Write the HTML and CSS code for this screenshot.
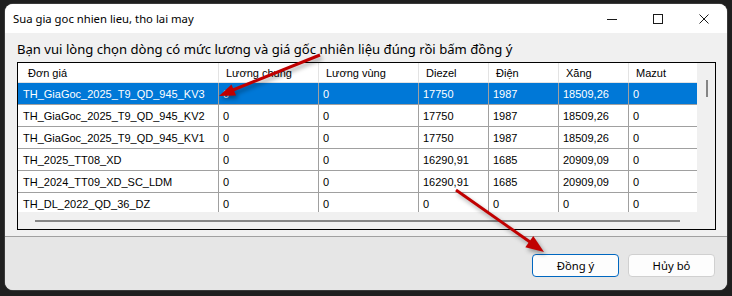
FILE: index.html
```html
<!DOCTYPE html>
<html lang="vi">
<head>
    <meta charset="UTF-8">
    <meta name="viewport" content="width=device-width, initial-scale=1.0">
    <title>Sua gia goc nhien lieu, tho lai may</title>
    <link rel="stylesheet" href="styles.css">
</head>
<body>
    <div class="window">
        <div class="titlebar">
            <span class="title">Sua gia goc nhien lieu, tho lai may</span>
            <div class="controls">
                <span class="ctl">
                    <svg width="10" height="10" viewBox="0 0 10 10"><path d="M0 5.5h10" stroke="#1a1a1a" stroke-width="1"/></svg>
                </span>
                <span class="ctl">
                    <svg width="10" height="10" viewBox="0 0 10 10"><rect x="0.5" y="0.5" width="9" height="9" fill="none" stroke="#1a1a1a" stroke-width="1"/></svg>
                </span>
                <span class="ctl">
                    <svg width="10" height="10" viewBox="0 0 10 10"><path d="M0.5 0.5l9 9M9.5 0.5l-9 9" stroke="#1a1a1a" stroke-width="1"/></svg>
                </span>
            </div>
        </div>

        <div class="content">
            <p class="prompt">Bạn vui lòng chọn dòng có mức lương và giá gốc nhiên liệu đúng rồi bấm đồng ý</p>

            <div class="grid">
                <div class="grid-main">
                    <div class="rows">
                        <div class="row head">
                            <span class="first">Đơn giá</span><span>Lương chung</span><span>Lương vùng</span><span>Diezel</span><span>Điện</span><span>Xăng</span><span>Mazut</span>
                        </div>
                        <div class="row selected">
                            <span>TH_GiaGoc_2025_T9_QD_945_KV3</span><span>0</span><span>0</span><span>17750</span><span>1987</span><span>18509,26</span><span>0</span>
                        </div>
                        <div class="row">
                            <span>TH_GiaGoc_2025_T9_QD_945_KV2</span><span>0</span><span>0</span><span>17750</span><span>1987</span><span>18509,26</span><span>0</span>
                        </div>
                        <div class="row">
                            <span>TH_GiaGoc_2025_T9_QD_945_KV1</span><span>0</span><span>0</span><span>17750</span><span>1987</span><span>18509,26</span><span>0</span>
                        </div>
                        <div class="row">
                            <span>TH_2025_TT08_XD</span><span>0</span><span>0</span><span>16290,91</span><span>1685</span><span>20909,09</span><span>0</span>
                        </div>
                        <div class="row">
                            <span>TH_2024_TT09_XD_SC_LDM</span><span>0</span><span>0</span><span>16290,91</span><span>1685</span><span>20909,09</span><span>0</span>
                        </div>
                        <div class="row">
                            <span>TH_DL_2022_QD_36_DZ</span><span>0</span><span>0</span><span>0</span><span>0</span><span>0</span><span>0</span>
                        </div>
                    </div>
                    <div class="vscroll"><span class="vthumb"></span></div>
                </div>
                <div class="hscroll"><span class="hthumb"></span></div>
            </div>
        </div>

        <div class="footer">
            <button class="btn primary">Đồng ý</button>
            <button class="btn">Hủy bỏ</button>
        </div>
    </div>

    <!-- red annotation arrows drawn over the dialog -->
    <svg class="arrows" width="732" height="296" viewBox="0 0 732 296">
        <g class="arrow">
            <line x1="320" y1="55" x2="233" y2="90" />
            <polygon points="219,96 236.1,95.6 231.5,84.4" />
        </g>
        <g class="arrow">
            <line x1="456" y1="190" x2="530" y2="242" />
            <polygon points="544,252 525.3,247.3 533.3,235.9" />
        </g>
    </svg>
</body>
</html>
```

FILE: styles.css
```css
body {
    margin: 0;
    width: 732px;
    height: 296px;
    overflow: hidden;
    background-color: #1f1f1f;
    padding: 4px 0 0 5px;
    box-sizing: border-box;
    position: relative;
    font-family: "Liberation Sans", Arial, sans-serif;
}

.window {
    width: 722px;
    height: 286px;
    background-color: #f0f0f0;
    border-radius: 8px;
    overflow: hidden;
    display: flex;
    flex-direction: column;
    box-shadow: 0 0 0 1px #3a3a3a;
}

.titlebar {
    height: 29px;
    background-color: #fff;
    display: flex;
    align-items: center;
    flex-shrink: 0;
}

.title {
    flex: 1;
    padding-left: 8px;
    font-family: "Noto Sans", sans-serif;
    font-size: 11.3px;
    color: #000;
}

.controls {
    display: flex;
    height: 100%;
}

.ctl {
    width: 46px;
    display: flex;
    align-items: center;
    justify-content: center;
}

.content {
    padding: 7px 11px 0 12px;
}

.prompt {
    margin: 0 0 3px;
    height: 19px;
    line-height: 19px;
    font-family: "Noto Sans", sans-serif;
    font-size: 13.1px;
    color: #000;
    white-space: nowrap;
}

.grid {
    border: 1px solid #000;
    height: 168px;
    box-sizing: border-box;
    display: flex;
    flex-direction: column;
}

.grid-main {
    display: flex;
    height: 149px;
}

.rows {
    width: 679px;
    overflow: hidden;
    background-color: #fff;
}

.row {
    display: grid;
    grid-template-columns: 201px 100px 100px 70px 70px 70px 100px;
    height: 22px;
    font-size: 11px;
    color: #000;
}

.row span {
    display: flex;
    align-items: center;
    padding-left: 4px;
    border-right: 1px solid #a0a0a0;
    border-bottom: 1px solid #a0a0a0;
    white-space: nowrap;
    overflow: hidden;
}

.row span:first-child {
    padding-left: 5px;
}

.row.head {
    height: 20px;
}

.row.head span {
    padding-left: 7px;
    border-right-color: #e3e3e3;
    border-bottom-color: #e3e3e3;
}

.row.head span.first {
    padding-left: 10px;
}

.row.selected span {
    background-color: #0078d7;
    color: #fff;
}

.vscroll {
    width: 18px;
    background-color: #f0f0f0;
    position: relative;
}

.vthumb {
    position: absolute;
    left: 9px;
    top: 17px;
    width: 2px;
    height: 17px;
    background-color: #858585;
}

.hscroll {
    flex: 1;
    background-color: #f0f0f0;
    position: relative;
}

.hthumb {
    position: absolute;
    left: 17px;
    top: 8px;
    width: 645px;
    height: 2px;
    background-color: #858585;
}

.footer {
    margin-top: 6px;
    flex: 1;
    border-top: 1px solid #a0a0a0;
    background-color: #e6e6e6;
    display: flex;
    justify-content: flex-end;
    align-items: flex-start;
    gap: 9px;
    padding: 17px 12px 0 0;
}

.btn {
    width: 87px;
    height: 23px;
    background-color: #fdfdfd;
    border: 1px solid #d0d0d0;
    border-radius: 4px;
    font-family: "Noto Sans", sans-serif;
    font-size: 11.3px;
    color: #000;
    padding: 0;
}

.btn.primary {
    border-color: #0067c0;
}

.arrows {
    position: absolute;
    left: 0;
    top: 0;
    pointer-events: none;
}

.arrow line {
    stroke: #c00000;
    stroke-width: 3;
}

.arrow polygon {
    fill: #c00000;
}

.arrow {
    filter: drop-shadow(2px 3px 2px rgba(0, 0, 0, 0.35));
}
```
